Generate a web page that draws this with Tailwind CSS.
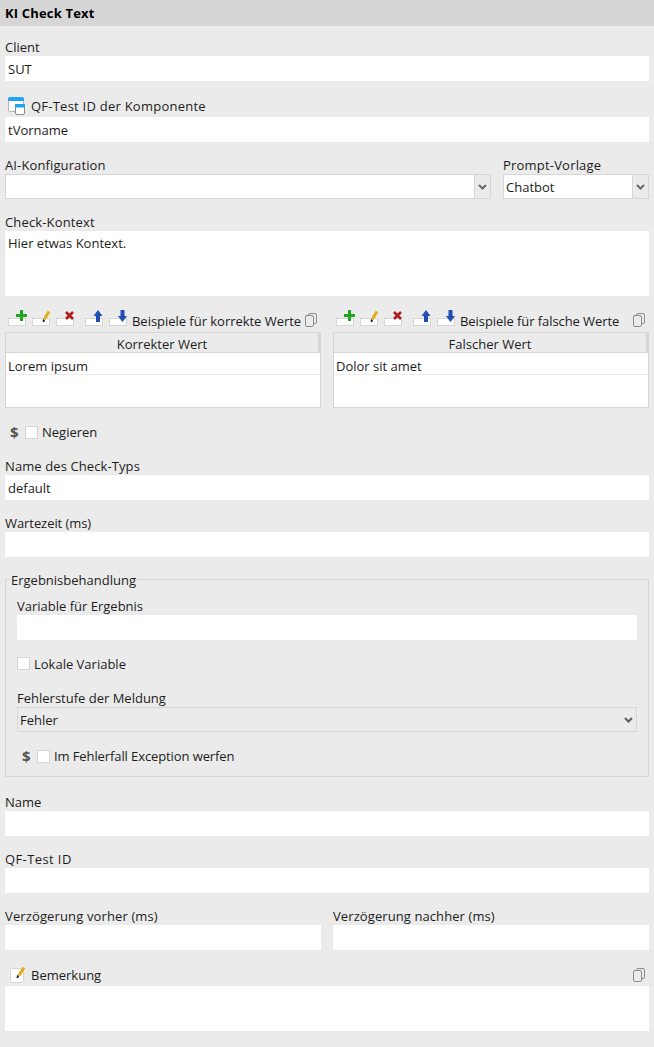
<!DOCTYPE html>
<html lang="de">
<head>
    <meta charset="UTF-8">
    <title>KI Check Text</title>
    <script src="https://cdn.jsdelivr.net/npm/@tailwindcss/browser@4"></script>
</head>
<body class="bg-[#ebebeb] text-[#1c1c1c] text-[13px] leading-[19px] font-['Open_Sans',sans-serif] w-[654px] h-[1047px] overflow-hidden">

    <!-- Titel -->
    <header class="h-[26px] bg-[#d6d6d6] pl-[5px] flex items-center font-bold text-black tracking-[.17px]">KI Check Text</header>

    <main class="px-[5px] flex flex-col">
        <!-- Client -->
        <label class="h-[19px] leading-[21px] mt-[11px]">Client</label>
        <input value="SUT" class="h-[25px] bg-white px-[3px] outline-none">

        <!-- Komponente -->
        <div class="h-[23px] mt-[13px] flex items-center pl-[3px] gap-[6px]">
            <svg width="17" height="18" viewBox="0 0 17 18">
                <rect x="0.5" y="0.5" width="15" height="14" rx="1.5" fill="#fff" stroke="#b5b5b5"/>
                <path d="M0 4V2a2 2 0 0 1 2-2h12a2 2 0 0 1 2 2v2z" fill="#1ea5f2"/>
                <rect x="7.5" y="7.5" width="9" height="10" rx="1.5" fill="#fff" stroke="#8a8a8a"/>
                <rect x="7" y="7" width="10" height="3.5" fill="#1ea5f2"/>
            </svg>
            <span class="mt-[2px] tracking-[.24px]">QF-Test ID der Komponente</span>
        </div>
        <input value="tVorname" class="h-[25px] bg-white px-[3px] outline-none">

        <!-- Auswahl -->
        <div class="mt-[13px] flex gap-3">
            <div class="w-[486px]">
                <div class="h-[19px] leading-[21px] tracking-[.12px]">AI-Konfiguration</div>
                <div class="h-[25px] border border-[#d6d6d6] flex">
                    <div class="flex-1 bg-white"></div>
                    <div class="w-[16px] border-l border-[#d6d6d6] flex items-center justify-center">
                        <svg width="9" height="6" viewBox="0 0 9 6"><path d="M1 1l3.5 3.5L8 1" fill="none" stroke="#6a6a6a" stroke-width="2"/></svg>
                    </div>
                </div>
            </div>
            <div class="flex-1">
                <div class="h-[19px] leading-[21px] tracking-[.2px]">Prompt-Vorlage</div>
                <div class="h-[25px] border border-[#d6d6d6] flex">
                    <div class="flex-1 bg-white pl-[2px] leading-[25px]">Chatbot</div>
                    <div class="w-[16px] border-l border-[#d6d6d6] flex items-center justify-center">
                        <svg width="9" height="6" viewBox="0 0 9 6"><path d="M1 1l3.5 3.5L8 1" fill="none" stroke="#6a6a6a" stroke-width="2"/></svg>
                    </div>
                </div>
            </div>
        </div>

        <!-- Kontext -->
        <label class="h-[19px] leading-[21px] mt-[13px] tracking-[.15px]">Check-Kontext</label>
        <textarea class="h-[65px] bg-white px-[3px] py-[3px] outline-none resize-none">Hier etwas Kontext.</textarea>

        <!-- Beispiele -->
        <div class="mt-[9px] grid grid-cols-2 gap-3">
            <div>
                <div class="h-[27px] flex items-start pt-[4px] pl-[3px] pr-[4px]">
                    <svg width="20" height="18" viewBox="0 0 20 18"><rect x="0.5" y="9.5" width="17" height="7" fill="#fff" stroke="#d6d6d6"/><path d="M13.5 1v11M8 6.500h11" stroke="#1fa51f" stroke-width="3"/></svg>
                    <svg width="20" height="18" viewBox="0 0 20 18" class="ml-[4px]"><rect x="0.5" y="9.5" width="17" height="7" fill="#fff" stroke="#d6d6d6"/><path d="M17 2.500l-4.500 7.500" stroke="#e3ac14" stroke-width="3"/><path d="M11.500 10.500l-.5 2.500 2-1.500z" fill="#222" stroke="#222"/></svg>
                    <svg width="20" height="18" viewBox="0 0 20 18" class="ml-[4px]"><rect x="0.5" y="9.5" width="17" height="7" fill="#fff" stroke="#d6d6d6"/><path d="M10 3l7 7M17 3l-7 7" stroke="#b01c1c" stroke-width="2.600"/></svg>
                    <svg width="20" height="18" viewBox="0 0 20 18" class="ml-[9px]"><rect x="0.5" y="9.5" width="17" height="7" fill="#fff" stroke="#d6d6d6"/><path d="M13 1l4.500 6H15v6h-4V7H8.500z" fill="#1f4db0"/></svg>
                    <svg width="20" height="18" viewBox="0 0 20 18" class="ml-[4px]"><rect x="0.5" y="9.5" width="17" height="7" fill="#fff" stroke="#d6d6d6"/><path d="M11.500 1h4v6H18l-4.500 6L9 7h2.500z" fill="#1f4db0"/></svg>
                    <span class="ml-[3px] mt-[3px] tracking-[-.03px]">Beispiele für korrekte Werte</span>
                    <svg width="12" height="14" viewBox="0 0 12 14" class="ml-auto mt-[4px]"><rect x="3.500" y="0.500" width="8" height="10" rx="1.500" fill="none" stroke="#8c8c8c"/><rect x="0.500" y="2.500" width="8" height="11" rx="1.500" fill="#ebebeb" stroke="#8c8c8c"/></svg>
                </div>
                <div class="h-[76px] border border-[#d6d6d6] bg-white">
                    <div class="h-[20px] leading-[22px] bg-[#ebebeb] border-b border-[#d6d6d6] border-r-2 text-center">Korrekter Wert</div>
                    <div class="h-[22px] border-b border-[#ebebeb] px-[2px] leading-[26px]">Lorem ipsum</div>
                </div>
            </div>
            <div>
                <div class="h-[27px] flex items-start pt-[4px] pl-[3px] pr-[4px]">
                    <svg width="20" height="18" viewBox="0 0 20 18"><rect x="0.5" y="9.5" width="17" height="7" fill="#fff" stroke="#d6d6d6"/><path d="M13.5 1v11M8 6.500h11" stroke="#1fa51f" stroke-width="3"/></svg>
                    <svg width="20" height="18" viewBox="0 0 20 18" class="ml-[4px]"><rect x="0.5" y="9.5" width="17" height="7" fill="#fff" stroke="#d6d6d6"/><path d="M17 2.500l-4.500 7.500" stroke="#e3ac14" stroke-width="3"/><path d="M11.500 10.500l-.5 2.500 2-1.500z" fill="#222" stroke="#222"/></svg>
                    <svg width="20" height="18" viewBox="0 0 20 18" class="ml-[4px]"><rect x="0.5" y="9.5" width="17" height="7" fill="#fff" stroke="#d6d6d6"/><path d="M10 3l7 7M17 3l-7 7" stroke="#b01c1c" stroke-width="2.600"/></svg>
                    <svg width="20" height="18" viewBox="0 0 20 18" class="ml-[9px]"><rect x="0.5" y="9.5" width="17" height="7" fill="#fff" stroke="#d6d6d6"/><path d="M13 1l4.500 6H15v6h-4V7H8.500z" fill="#1f4db0"/></svg>
                    <svg width="20" height="18" viewBox="0 0 20 18" class="ml-[4px]"><rect x="0.5" y="9.5" width="17" height="7" fill="#fff" stroke="#d6d6d6"/><path d="M11.500 1h4v6H18l-4.500 6L9 7h2.500z" fill="#1f4db0"/></svg>
                    <span class="ml-[3px] mt-[3px] tracking-[-.07px]">Beispiele für falsche Werte</span>
                    <svg width="12" height="14" viewBox="0 0 12 14" class="ml-auto mt-[4px]"><rect x="3.500" y="0.500" width="8" height="10" rx="1.500" fill="none" stroke="#8c8c8c"/><rect x="0.500" y="2.500" width="8" height="11" rx="1.500" fill="#ebebeb" stroke="#8c8c8c"/></svg>
                </div>
                <div class="h-[76px] border border-[#d6d6d6] bg-white">
                    <div class="h-[20px] leading-[22px] bg-[#ebebeb] border-b border-[#d6d6d6] border-r-2 text-center">Falscher Wert</div>
                    <div class="h-[22px] border-b border-[#ebebeb] px-[2px] leading-[26px]">Dolor sit amet</div>
                </div>
            </div>
        </div>

        <!-- Negieren -->
        <div class="h-[19px] mt-[15px] flex items-center">
            <span class="w-[20px] pl-[5px] font-bold text-[#555555] text-[15px]">$</span>
            <span class="w-[13px] h-[13px] bg-white border border-[#d6d6d6]"></span>
            <span class="ml-[4px]">Negieren</span>
        </div>

        <label class="h-[19px] leading-[21px] mt-[14px] tracking-[.1px]">Name des Check-Typs</label>
        <input value="default" class="h-[25px] bg-white px-[3px] outline-none">

        <label class="h-[19px] leading-[21px] mt-[13px] tracking-[-.07px]">Wartezeit (ms)</label>
        <input class="h-[25px] bg-white px-[3px] outline-none">

        <!-- Ergebnisbehandlung -->
        <section class="relative mt-[22px] h-[198px] border border-[#d6d6d6] px-[11px] pt-[16px] flex flex-col">
            <span class="absolute left-[4px] top-[-9px] bg-[#ebebeb] px-px">Ergebnisbehandlung</span>
            <label class="h-[19px] leading-[21px]">Variable für Ergebnis</label>
            <input class="h-[25px] bg-white px-[3px] outline-none">
            <div class="h-[19px] mt-[14px] flex items-center">
                <span class="w-[13px] h-[13px] bg-white border border-[#d6d6d6]"></span>
                <span class="ml-[4px] mt-[2px]">Lokale Variable</span>
            </div>
            <label class="h-[19px] leading-[21px] mt-[15px]">Fehlerstufe der Meldung</label>
            <div class="h-[25px] border border-[#d6d6d6] flex items-center justify-between pl-[2px] pr-[3px]">
                <span class="mt-[1px]">Fehler</span>
                <svg width="9" height="6" viewBox="0 0 9 6"><path d="M1 1l3.500 3.500L8 1" fill="none" stroke="#5a5a5a" stroke-width="2"/></svg>
            </div>
            <div class="h-[19px] mt-[15px] flex items-center">
                <span class="w-[20px] pl-[5px] font-bold text-[#555555] text-[15px]">$</span>
                <span class="w-[13px] h-[13px] bg-white border border-[#d6d6d6]"></span>
                <span class="ml-[4px] tracking-[-.1px]">Im Fehlerfall Exception werfen</span>
            </div>
        </section>

        <label class="h-[19px] leading-[21px] mt-[15px]">Name</label>
        <input class="h-[25px] bg-white px-[3px] outline-none">

        <label class="h-[19px] leading-[21px] mt-[13px] tracking-[.4px]">QF-Test ID</label>
        <input class="h-[25px] bg-white px-[3px] outline-none">

        <div class="mt-[13px] grid grid-cols-2 gap-3">
            <div class="flex flex-col">
                <label class="h-[19px] leading-[21px] tracking-[.13px]">Verzögerung vorher (ms)</label>
                <input class="h-[25px] bg-white px-[3px] outline-none">
            </div>
            <div class="flex flex-col">
                <label class="h-[19px] leading-[21px] tracking-[.09px]">Verzögerung nachher (ms)</label>
                <input class="h-[25px] bg-white px-[3px] outline-none">
            </div>
        </div>

        <!-- Bemerkung -->
        <div class="h-[23px] mt-[13px] flex items-center pl-[5px] pr-[4px]">
            <svg width="16" height="17" viewBox="0 0 16 17">
                <rect x="0.5" y="2.500" width="13" height="14" rx="1" fill="#fff" stroke="#d6d6d6"/>
                <path d="M14 1.500l-5 8" stroke="#e3ac14" stroke-width="3"/>
                <path d="M7.500 9.500l-.5 2.500 2-1.500z" fill="#222" stroke="#222"/>
            </svg>
            <span class="ml-[5px] mt-[2px]">Bemerkung</span>
            <svg width="12" height="14" viewBox="0 0 12 14" class="ml-auto"><rect x="3.500" y="0.500" width="8" height="10" rx="1.500" fill="none" stroke="#8c8c8c"/><rect x="0.500" y="2.500" width="8" height="11" rx="1.500" fill="#ebebeb" stroke="#8c8c8c"/></svg>
        </div>
        <textarea class="h-[45px] bg-white px-[3px] py-[3px] outline-none resize-none"></textarea>
    </main>
</body>
</html>
